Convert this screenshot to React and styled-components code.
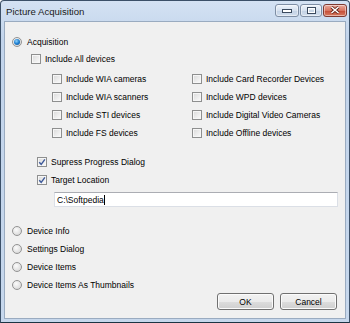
import React from "react";
import styled, { createGlobalStyle } from "styled-components";

const Global = createGlobalStyle`
  html, body { margin: 0; padding: 0; background: #fff; }
  body { font-family: "Liberation Sans", Arial, sans-serif; }
`;

const Window = styled.div`
  width: 350px;
  height: 323px;
  box-sizing: border-box;
  display: flex;
  flex-direction: column;
  background: linear-gradient(180deg, #d4e2f3 0%, #c2d4eb 12%, #c6d7ec 100%);
  border: 1px solid #3c5068;
  border-bottom-color: #1b3443;
  border-radius: 4px 4px 0 0;
  overflow: hidden;
`;

const TitleBar = styled.div`
  height: 20px;
  display: flex;
  align-items: center;
  padding: 0 2px 0 5px;
  .title {
    flex: 1;
    font-size: 9.6px;
    color: #1a1a1a;
  }
`;

const Caption = styled.div`
  display: flex;
  gap: 1px;
  margin-top: -2px;
`;

const CapButton = styled.div`
  width: ${(p) => p.$w}px;
  height: 13px;
  box-sizing: border-box;
  border: 1px solid ${(p) => (p.$close ? "#7d3a32" : "#7e8ea4")};
  border-radius: 3px;
  display: flex;
  align-items: center;
  justify-content: center;
  background: ${(p) =>
    p.$close
      ? "linear-gradient(180deg, #e9a99c 0%, #d8745f 50%, #c44a35 51%, #d77a5f 100%)"
      : "linear-gradient(180deg, #eef3fa 0%, #d6e1ef 50%, #c3d2e5 51%, #d2deed 100%)"};
  box-shadow: inset 0 0 0 1px rgba(255, 255, 255, 0.45);
`;

const Body = styled.div`
  flex: 1;
  margin: 0 3px 3px 3px;
  background: #f0f0f0;
  border: 1px solid #9aabc0;
  padding: 11px 8px 0 7px;
  display: flex;
  flex-direction: column;
  font-size: 8.5px;
  color: #000;
`;

const Row = styled.div`
  height: ${(p) => p.$h || 18}px;
  display: flex;
  align-items: center;
  gap: ${(p) => (p.$radio ? 5 : 4)}px;
  margin-left: ${(p) => p.$indent || 0}px;
  margin-top: ${(p) => p.$top || 0}px;
  white-space: nowrap;
`;

const Box = styled.span`
  width: 10px;
  height: 10px;
  box-sizing: border-box;
  flex: none;
  border: 1px solid #8e8f8f;
  background: linear-gradient(135deg, #d9d9d9 0%, #eeeeee 60%, #fbfbfb 100%);
  box-shadow: inset 0 0 0 1px #f6f6f6;
  display: flex;
  align-items: center;
  justify-content: center;
`;

const Radio = styled.span`
  width: 10px;
  height: 10px;
  box-sizing: border-box;
  flex: none;
  border-radius: 50%;
  border: 1px solid #939393;
  background: radial-gradient(circle at 40% 35%, #fbfbfb 0%, #e4e4e4 55%, #cfcfcf 100%);
  display: flex;
  align-items: center;
  justify-content: center;
  &::after {
    content: "";
    display: ${(p) => (p.$on ? "block" : "none")};
    width: 6px;
    height: 6px;
    border-radius: 50%;
    background: radial-gradient(circle at 40% 35%, #8fd4ff 0%, #1f7fd0 50%, #0f4f8e 100%);
  }
`;

const Grid = styled.div`
  display: grid;
  grid-template-columns: 140px 1fr;
  margin-left: 40px;
  margin-top: 2px;
`;

const TextBox = styled.div`
  margin: 3px 0 0 42px;
  width: 284px;
  height: 15px;
  box-sizing: border-box;
  background: #fff;
  border: 1px solid #dbdfe6;
  border-top-color: #abadb3;
  display: flex;
  align-items: center;
  padding-left: 2px;
  .caret {
    width: 1px;
    height: 10px;
    background: #000;
    margin-left: 0.5px;
  }
`;

const Footer = styled.div`
  display: flex;
  justify-content: space-between;
  margin-top: 15px;
`;

const RadioList = styled.div`
  display: flex;
  flex-direction: column;
  padding-bottom: 16px;
`;

const Buttons = styled.div`
  align-self: flex-end;
  display: flex;
  gap: 6px;
`;

const Button = styled.div`
  width: 57px;
  height: 17px;
  box-sizing: border-box;
  border: 1px solid #707070;
  border-radius: 3px;
  background: linear-gradient(180deg, #f2f2f2 0%, #ebebeb 50%, #dddddd 51%, #cfcfcf 100%);
  box-shadow: inset 0 0 0 1px #fbfbfb;
  display: flex;
  align-items: center;
  justify-content: center;
  font-size: 8.5px;
`;

const Check = () => (
  <svg width="8" height="8" viewBox="0 0 8 8">
    <path d="M1.2 4.2 L3.2 6.3 L6.9 1.3" fill="none" stroke="#3e5a9a" strokeWidth="1.4" />
  </svg>
);

const CheckRow = ({ label, checked, indent, top, h }) => (
  <Row $indent={indent} $top={top} $h={h}>
    <Box>{checked && <Check />}</Box>
    <span>{label}</span>
  </Row>
);

const RadioRow = ({ label, on, top }) => (
  <Row $radio $top={top}>
    <Radio $on={on} />
    <span>{label}</span>
  </Row>
);

const devices = [
  ["Include WIA cameras", "Include Card Recorder Devices"],
  ["Include WIA scanners", "Include WPD devices"],
  ["Include STI devices", "Include Digital Video Cameras"],
  ["Include FS devices", "Include Offline devices"],
];

export default function App() {
  return (
    <>
      <Global />
      <Window>
        <TitleBar>
          <span className="title">Picture Acquisition</span>
          <Caption>
            <CapButton $w={24}>
              <svg width="10" height="5" viewBox="0 0 10 5">
                <rect x="0.5" y="1.5" width="9" height="3" fill="#fff" stroke="#3b4a5e" />
              </svg>
            </CapButton>
            <CapButton $w={22}>
              <svg width="9" height="7" viewBox="0 0 9 7">
                <rect x="0.5" y="0.5" width="8" height="6" fill="#fff" stroke="#3b4a5e" />
                <rect x="2" y="2.5" width="5" height="2.5" fill="#c9d6e6" />
              </svg>
            </CapButton>
            <CapButton $w={24} $close>
              <svg width="10" height="8" viewBox="0 0 10 8">
                <path d="M1.5 1 L8.5 7 M8.5 1 L1.5 7" stroke="#5a1d14" strokeWidth="3" />
                <path d="M1.5 1 L8.5 7 M8.5 1 L1.5 7" stroke="#fff" strokeWidth="1.6" />
              </svg>
            </CapButton>
          </Caption>
        </TitleBar>
        <Body>
          <RadioRow label="Acquisition" on />
          <CheckRow label="Include All devices" indent={19} top={-1} />
          <Grid>
            {devices.map(([a, b], i) => (
              <React.Fragment key={a}>
                <CheckRow label={a} h={i === 3 ? 17 : 18} />
                <CheckRow label={b} h={i === 3 ? 17 : 18} />
              </React.Fragment>
            ))}
          </Grid>
          <CheckRow label="Supress Progress Dialog" checked indent={25} top={12} />
          <CheckRow label="Target Location" checked indent={25} />
          <TextBox>
            <span>C:\Softpedia</span>
            <span className="caret" />
          </TextBox>
          <Footer>
            <RadioList>
              <RadioRow label="Device Info" />
              <RadioRow label="Settings Dialog" />
              <RadioRow label="Device Items" />
              <RadioRow label="Device Items As Thumbnails" />
            </RadioList>
            <Buttons>
              <Button>OK</Button>
              <Button>Cancel</Button>
            </Buttons>
          </Footer>
        </Body>
      </Window>
    </>
  );
}
